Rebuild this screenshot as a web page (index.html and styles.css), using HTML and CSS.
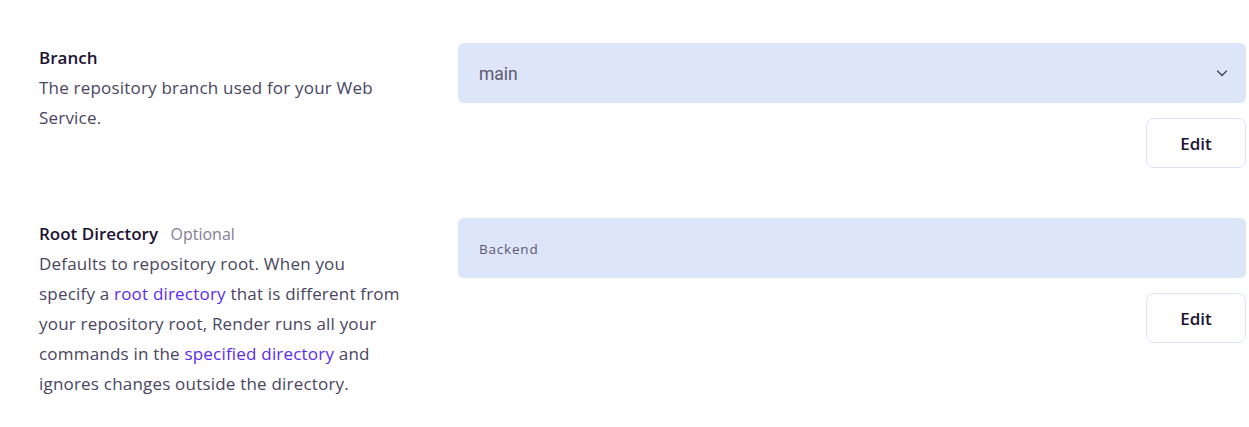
FILE: index.html
```html
<!DOCTYPE html>
<html>
<head>
<meta charset="utf-8">
<link rel="stylesheet" href="styles.css">
</head>
<body>
<div class="page">
  <section class="row">
    <div class="info">
      <div class="title">Branch</div>
      <p class="desc">The repository branch used for your Web Service.</p>
    </div>
    <div class="control">
      <div class="field select">
        <span class="value">main</span>
        <svg class="chev" width="14" height="14" viewBox="0 0 14 14"><path d="M2.5 5 L7 9.5 L11.5 5" fill="none" stroke="#4a4560" stroke-width="1.4" stroke-linecap="round" stroke-linejoin="round"/></svg>
      </div>
      <button class="edit">Edit</button>
    </div>
  </section>
  <section class="row second">
    <div class="info">
      <div class="title">Root Directory <span class="opt">Optional</span></div>
      <p class="desc">Defaults to repository root. When you specify a <a href="#">root directory</a> that is different from your repository root, Render runs all your commands in the <a href="#">specified directory</a> and ignores changes outside the directory.</p>
    </div>
    <div class="control">
      <div class="field text">
        <span class="value mono">Backend</span>
      </div>
      <button class="edit">Edit</button>
    </div>
  </section>
</div>
</body>
</html>
```
FILE: styles.css
```css
* { box-sizing: border-box; }
body {
  margin: 0;
  background: #ffffff;
  font-family: "Open Sans", "Noto Sans", sans-serif;
  color: #1c1233;
}
.page {
  padding: 43px 3px 0 39px;
  display: flex;
  flex-direction: column;
  gap: 50px;
}
.row {
  display: flex;
  gap: 55px;
}
.info {
  width: 364px;
  flex: none;
  padding-top: 3px;
}
.second .info { padding-top: 4px; }
.title {
  font-size: 17px;
  font-weight: 600;
  line-height: 24px;
  color: #1c1233;
}
.opt {
  font-weight: 400;
  color: #847e96;
  font-size: 16px;
  margin-left: 8px;
}
.desc {
  margin: 3px 0 0;
  font-size: 17px;
  letter-spacing: 0.2px;
  line-height: 30px;
  color: #4a4560;
}
.desc a {
  color: #5b2cf4;
  text-decoration: none;
}
.control {
  flex: 1;
  display: flex;
  flex-direction: column;
  align-items: flex-end;
  gap: 15px;
}
.field {
  width: 100%;
  height: 60px;
  background: #dde5f8;
  border-radius: 6px;
  display: flex;
  align-items: center;
  padding: 0 20px 0 21px;
}
.field .value {
  flex: 1;
  font-family: Roboto, sans-serif;
  font-size: 17.5px;
  color: #5e5873;
  padding-top: 2px;
}
.field .value.mono {
  font-family: "Open Sans", sans-serif;
  font-size: 13.5px;
  letter-spacing: 0.8px;
  padding-top: 1px;
}
.chev { flex: none; margin-right: -3px; }
.edit {
  width: 100px;
  height: 50px;
  background: #ffffff;
  border: 1px solid #dde5f8;
  border-radius: 8px;
  font-family: "Open Sans", sans-serif;
  font-size: 17px;
  font-weight: 600;
  color: #1c1233;
}
```
